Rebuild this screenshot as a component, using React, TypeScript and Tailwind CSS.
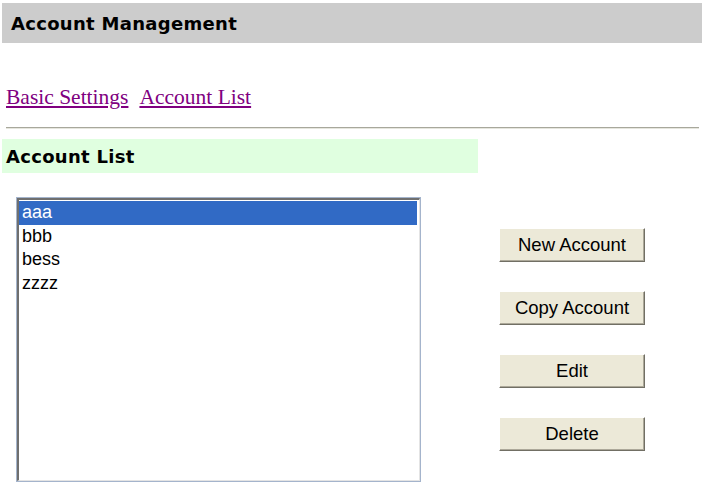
import React from "react";

const items = ["aaa", "bbb", "bess", "zzzz"];
const buttons = ["New Account", "Copy Account", "Edit", "Delete"];

export default function App() {
  return (
    <div className="w-[703px] h-[484px] bg-white overflow-hidden flex flex-col">
      <div
        className="ml-[2px] mt-[3px] w-[700px] h-[40px] shrink-0 bg-[#cccccc] flex items-center pl-[9px] text-[18px] font-bold tracking-[0.3px] text-black"
        style={{ fontFamily: '"DejaVu Sans", Verdana, sans-serif' }}
      >
        Account Management
      </div>

      <div
        className="mt-[43px] ml-[6px] h-[23px] leading-[23px] text-[21.5px] text-[#800080] flex gap-[11px] shrink-0"
        style={{ fontFamily: '"Liberation Serif", "Times New Roman", serif' }}
      >
        <a href="#" className="underline">Basic Settings</a>
        <a href="#" className="underline">Account List</a>
      </div>

      <div className="mt-[18px] ml-[6px] w-[693px] border-t border-b border-t-[#a8a89c] border-b-[#e6e6de] shrink-0" />

      <div
        className="mt-[10px] ml-[2px] w-[476px] h-[34px] shrink-0 bg-[#e0ffe0] flex items-center pl-[4px] text-[18px] font-bold tracking-[0.3px] text-black"
        style={{ fontFamily: '"DejaVu Sans", Verdana, sans-serif' }}
      >
        Account List
      </div>

      <div className="mt-[24px] flex shrink-0">
        <div className="ml-[16px] w-[405px] h-[285px] border border-[#a4b4cc] bg-white">
          <div
            className="w-full h-full border-t-2 border-l-2 border-t-[#6f6f6f] border-l-[#6f6f6f] border-r border-b border-r-[#e4e4e4] border-b-[#e4e4e4] pt-[1px] pr-[2px]"
            style={{ fontFamily: '"Liberation Sans", Arial, sans-serif' }}
          >
            {items.map((it, i) => (
              <div
                key={it}
                className={
                  "h-[23.5px] leading-[23.5px] pl-[3px] text-[18px] " +
                  (i === 0 ? "bg-[#316ac5] text-white" : "text-black")
                }
              >
                {it}
              </div>
            ))}
          </div>
        </div>

        <div className="ml-[78px] mt-[31px] flex flex-col gap-[29px]">
          {buttons.map((b) => (
            <button
              key={b}
              className="w-[146px] h-[34px] bg-[#ece9d8] border border-t-white border-l-white border-r-[#716f64] border-b-[#716f64] shadow-[inset_-1px_-1px_0_#aca899] text-[18.5px] text-black flex items-center justify-center"
              style={{ fontFamily: '"Liberation Sans", Arial, sans-serif' }}
            >
              {b}
            </button>
          ))}
        </div>
      </div>
    </div>
  );
}
